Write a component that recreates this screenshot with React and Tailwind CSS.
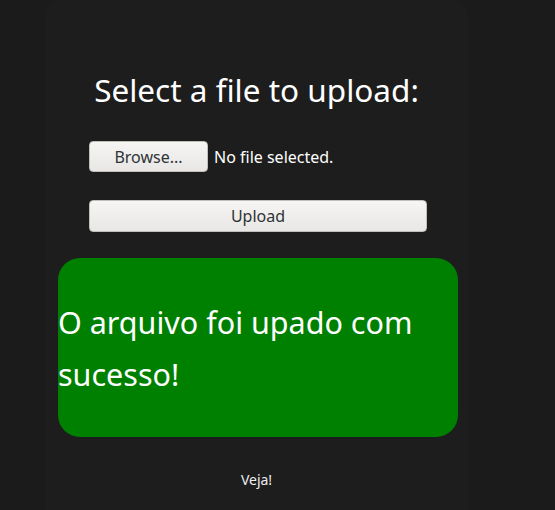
export default function App() {
  return (
    <div className="min-h-screen bg-[#1b1b1b] font-['Noto_Sans',sans-serif] text-white">
      <div className="ml-[45px] w-[423px] min-h-[510px] rounded-t-[14px] bg-[#1d1d1d]">
        <h1 className="pt-[70px] text-center text-[31.5px] leading-[40px] font-normal">
          Select a file to upload:
        </h1>
        <form className="mt-[31px] pl-[44px]" onSubmit={(e) => e.preventDefault()}>
          <div className="flex items-center h-[31px]">
            <button
              type="button"
              className="h-[31px] w-[119px] rounded-[4px] border border-[#c0bfbc] bg-gradient-to-b from-[#f6f5f4] to-[#e8e7e5] text-[16px] text-[#2e3436]"
            >
              Browse...
            </button>
            <span className="ml-[6px] text-[16px] text-white">No file selected.</span>
          </div>
          <button
            type="submit"
            className="mt-[28px] h-[32px] w-[338px] rounded-[4px] border border-[#c0bfbc] bg-gradient-to-b from-[#f6f5f4] to-[#e8e7e5] text-[16px] text-[#2e3436]"
          >
            Upload
          </button>
        </form>
        <div className="mt-[26px] ml-[13px] w-[400px] h-[179px] rounded-[22px] bg-[#008000] flex items-center">
          <p className="text-[30.5px] leading-[52px] pr-[40px]">O arquivo foi upado com sucesso!</p>
        </div>
        <p className="mt-[32px] text-center text-[14px] text-[#eeeeee]">Veja!</p>
      </div>
    </div>
  );
}
